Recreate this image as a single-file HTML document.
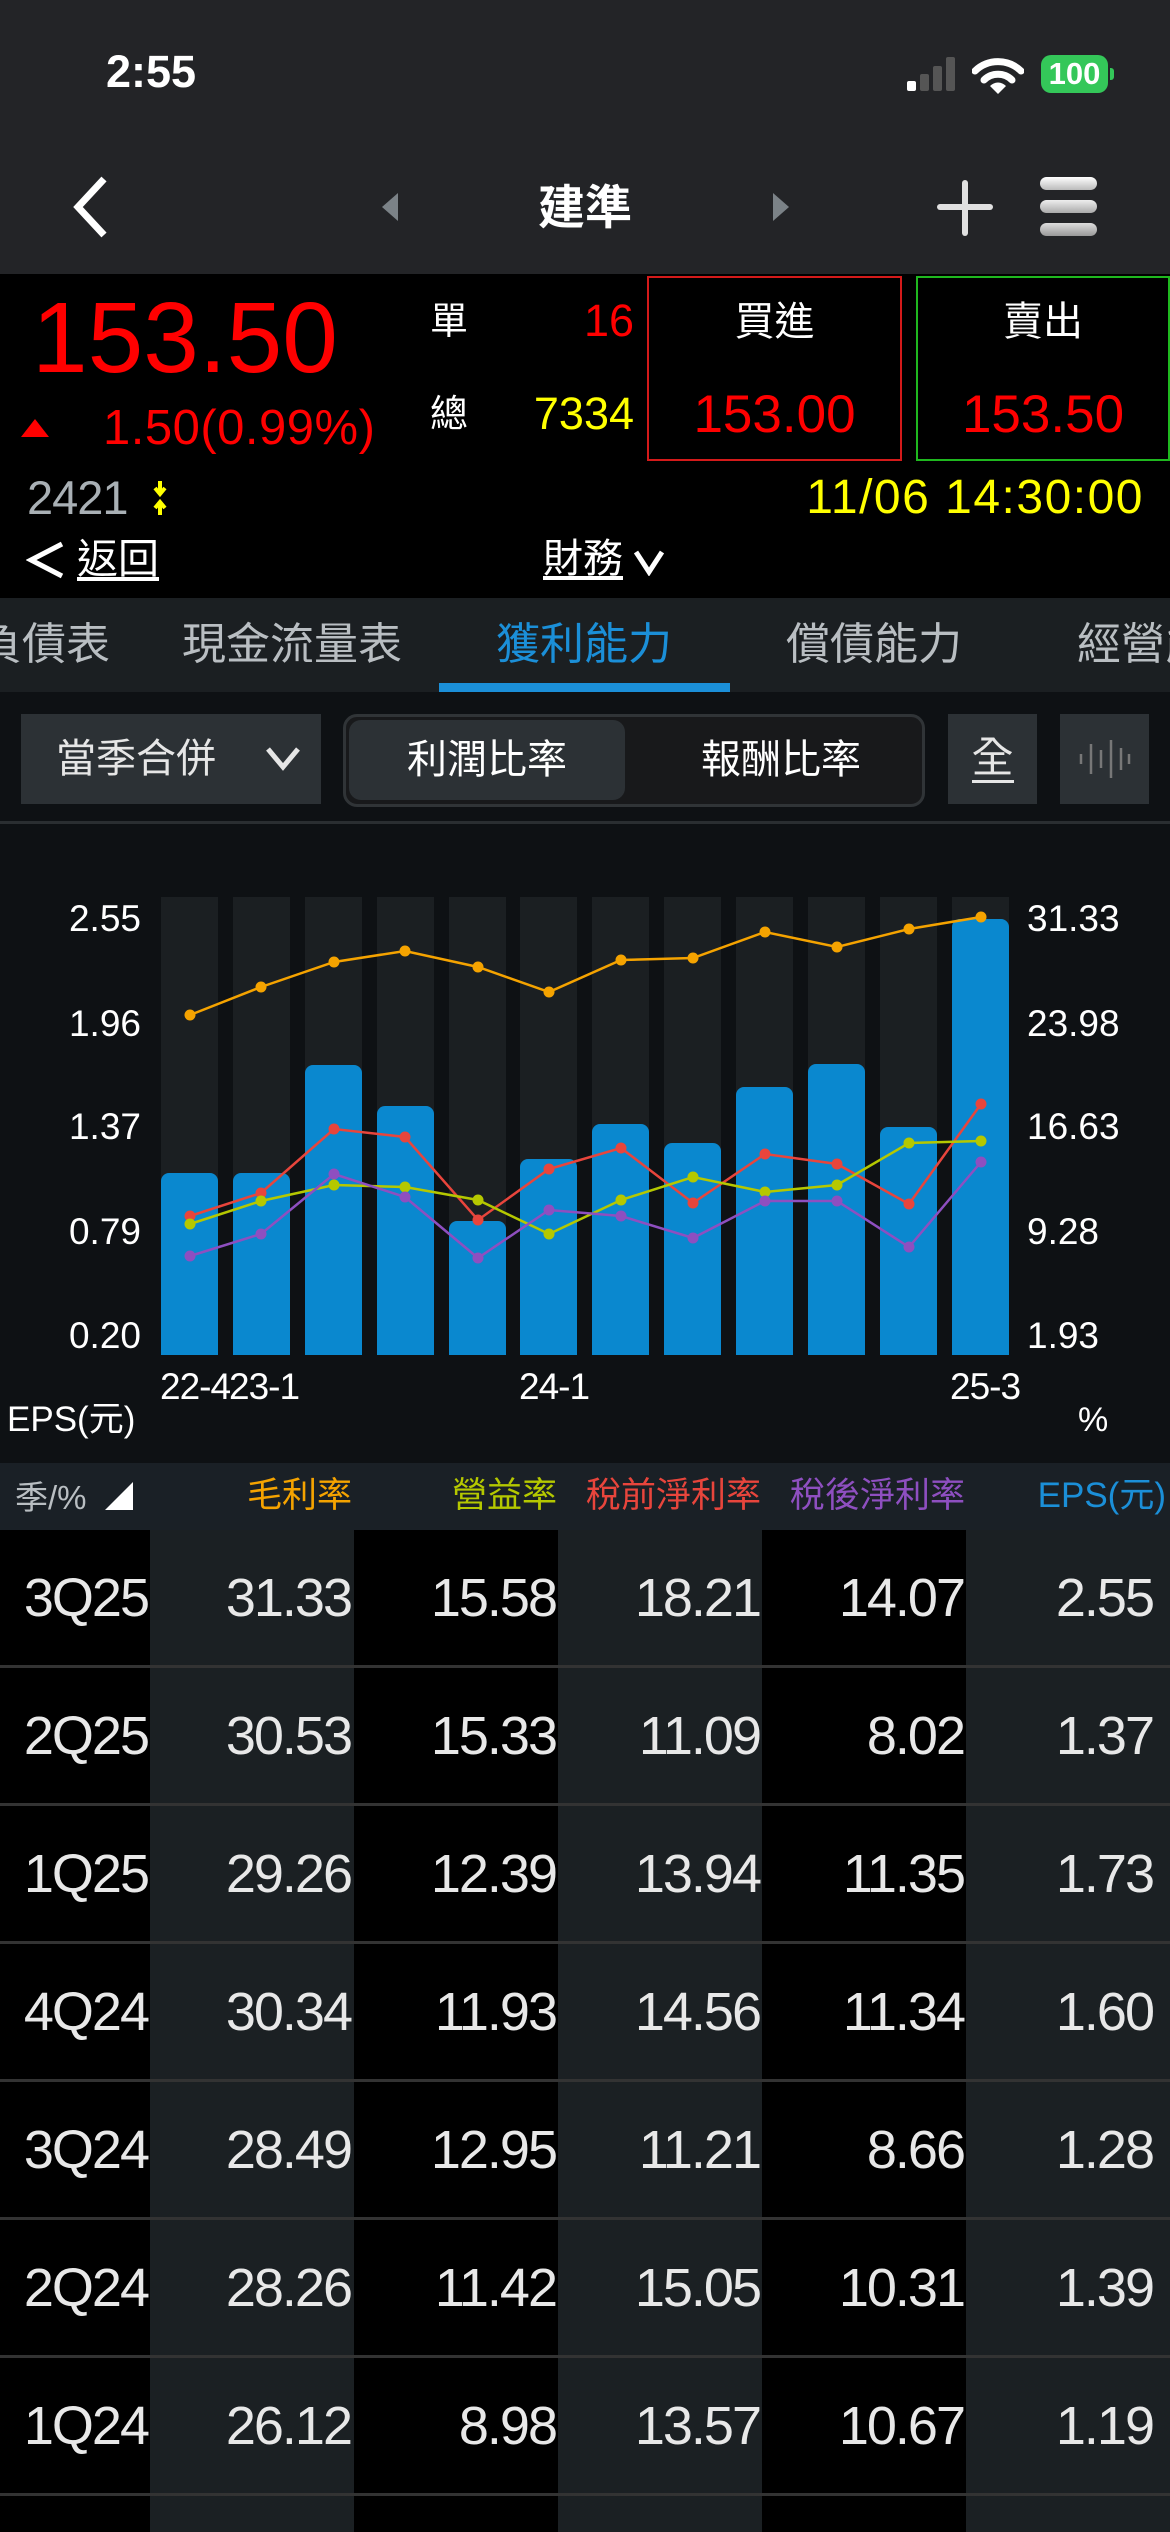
<!DOCTYPE html>
<html><head><meta charset="utf-8"><style>
*{margin:0;padding:0;box-sizing:border-box}
body{width:1170px;height:2532px;background:#000;position:relative;overflow:hidden;font-family:"Liberation Sans","Noto Sans CJK TC",sans-serif;color:#fff}
.a{position:absolute;white-space:nowrap}
.r{text-align:right}
.c{text-align:center}
.t{position:absolute;font-size:54px;line-height:60px;color:#e8e8e8;text-align:right;letter-spacing:-2px}
</style></head><body>
<!-- status + nav -->
<div class="a" style="left:0;top:0;width:1170px;height:274px;background:#232427"></div>
<div class="a" style="left:106px;top:44px;font-size:45px;font-weight:bold;line-height:56px">2:55</div>
<div class="a" style="left:907px;top:81px;width:9px;height:10px;background:#fff;border-radius:2px"></div>
<div class="a" style="left:920px;top:74px;width:9px;height:17px;background:#555;border-radius:2px"></div>
<div class="a" style="left:933px;top:66px;width:9px;height:25px;background:#555;border-radius:2px"></div>
<div class="a" style="left:946px;top:57px;width:9px;height:34px;background:#555;border-radius:2px"></div>
<svg class="a" style="left:972px;top:55px" width="52" height="40" viewBox="0 0 52 40"><path d="M3 16 A33 33 0 0 1 49 16" stroke="#fff" stroke-width="7" fill="none" stroke-linecap="round"/><path d="M12 25 A20 20 0 0 1 40 25" stroke="#fff" stroke-width="7" fill="none" stroke-linecap="round"/><path d="M18 31 L26 39 L34 31 A11 11 0 0 0 18 31Z" fill="#fff"/></svg>
<div class="a c" style="left:1041px;top:55px;width:67px;height:38px;background:#34c759;border-radius:10px;font-size:31px;font-weight:bold;line-height:38px">100</div>
<div class="a" style="left:1110px;top:68px;width:4px;height:12px;background:#34c759;border-radius:0 3px 3px 0"></div>
<svg class="a" style="left:66px;top:175px" width="48" height="64" viewBox="0 0 48 64"><path d="M38 4 L12 32 L38 60" stroke="#fff" stroke-width="7" fill="none"/></svg>
<svg class="a" style="left:380px;top:192px" width="20" height="30"><path d="M18 1 L2 15 L18 29Z" fill="#7b8287"/></svg>
<svg class="a" style="left:771px;top:192px" width="20" height="30"><path d="M2 1 L18 15 L2 29Z" fill="#7b8287"/></svg>
<div class="a c" style="left:485px;top:178px;width:200px;font-size:47px;font-weight:bold;line-height:60px">建準</div>
<div class="a" style="left:962px;top:180px;width:6px;height:56px;background:#e0e0e0;border-radius:3px"></div>
<div class="a" style="left:937px;top:204px;width:56px;height:6px;background:#e0e0e0;border-radius:3px"></div>
<div class="a" style="left:1040px;top:177px;width:57px;height:13px;background:linear-gradient(#fff,#bbb);border-radius:7px"></div>
<div class="a" style="left:1040px;top:200px;width:57px;height:13px;background:linear-gradient(#eee,#aaa);border-radius:7px"></div>
<div class="a" style="left:1040px;top:223px;width:57px;height:13px;background:linear-gradient(#ddd,#999);border-radius:7px"></div>
<!-- quote -->
<div class="a" style="left:32px;top:283px;font-size:100px;color:#ff0000;line-height:110px">153.50</div>
<svg class="a" style="left:20px;top:418px" width="30" height="20"><path d="M15 1 L29 19 L1 19Z" fill="#ff0000"/></svg>
<div class="a" style="left:103px;top:400px;font-size:49px;color:#ff0000;line-height:56px;letter-spacing:0.5px">1.50(0.99%)</div>
<div class="a" style="left:430px;top:299px;font-size:38px;line-height:46px">單</div>
<div class="a r" style="left:520px;top:296px;width:114px;font-size:45px;color:#ff0000;line-height:50px">16</div>
<div class="a" style="left:430px;top:392px;font-size:38px;line-height:46px">總</div>
<div class="a r" style="left:500px;top:389px;width:134px;font-size:45px;color:#ffff00;line-height:50px">7334</div>
<div class="a" style="left:647px;top:276px;width:255px;height:185px;border:2px solid #d41a1a"></div>
<div class="a c" style="left:647px;top:297px;width:255px;font-size:40px;line-height:50px">買進</div>
<div class="a c" style="left:647px;top:385px;width:255px;font-size:53px;color:#ff0000;line-height:60px">153.00</div>
<div class="a" style="left:916px;top:276px;width:254px;height:185px;border:2px solid #1fb81f"></div>
<div class="a c" style="left:916px;top:297px;width:254px;font-size:40px;line-height:50px">賣出</div>
<div class="a c" style="left:916px;top:385px;width:254px;font-size:53px;color:#ff0000;line-height:60px">153.50</div>
<div class="a" style="left:27px;top:470px;font-size:47px;color:#a9b0b5;line-height:56px;letter-spacing:-1px">2421</div>
<svg class="a" style="left:151px;top:480px" width="18" height="36"><path d="M9 1 V13 M4 8 L9 14 L14 8 M9 35 V23 M4 28 L9 22 L14 28" stroke="#ffff00" stroke-width="4" fill="none"/></svg>
<div class="a r" style="left:700px;top:470px;width:444px;font-size:48px;color:#ffff00;line-height:56px;letter-spacing:1.5px">11/06 14:30:00</div>
<svg class="a" style="left:26px;top:540px" width="40" height="40"><path d="M36 4 L5 20 L36 36" stroke="#fff" stroke-width="5" fill="none"/></svg>
<div class="a" style="left:77px;top:535px;font-size:41px;line-height:48px;text-decoration:underline;text-underline-offset:4px">返回</div>
<div class="a" style="left:543px;top:535px;font-size:40px;line-height:48px;text-decoration:underline;text-underline-offset:4px">財務</div>
<svg class="a" style="left:633px;top:548px" width="32" height="28"><path d="M3 4 L16 24 L29 4" stroke="#fff" stroke-width="5" fill="none"/></svg>
<!-- tabs -->
<div class="a" style="left:0;top:598px;width:1170px;height:94px;background:#1b1f22;overflow:hidden">
<div class="a" style="left:-22px;top:20px;font-size:44px;color:#b9bec2;line-height:54px">負債表</div>
<div class="a" style="left:182px;top:20px;font-size:44px;color:#b9bec2;line-height:54px">現金流量表</div>
<div class="a" style="left:496px;top:20px;font-size:44px;color:#1b8fd8;line-height:54px">獲利能力</div>
<div class="a" style="left:786px;top:20px;font-size:44px;color:#b9bec2;line-height:54px">償債能力</div>
<div class="a" style="left:1077px;top:20px;font-size:44px;color:#b9bec2;line-height:54px">經營能力</div>
<div class="a" style="left:439px;top:85px;width:291px;height:9px;background:#1b8fd8"></div>
</div>
<!-- controls -->
<div class="a" style="left:0;top:692px;width:1170px;height:771px;background:#0e1114"></div>
<div class="a" style="left:21px;top:714px;width:300px;height:90px;background:#2c3135"></div>
<div class="a" style="left:56px;top:734px;font-size:40px;color:#e6e6e6;line-height:50px">當季合併</div>
<svg class="a" style="left:265px;top:745px" width="36" height="28"><path d="M3 4 L18 22 L33 4" stroke="#e6e6e6" stroke-width="5" fill="none"/></svg>
<div class="a" style="left:343px;top:714px;width:582px;height:93px;background:#18191b;border:3px solid #303437;border-radius:14px"></div>
<div class="a" style="left:349px;top:720px;width:276px;height:80px;background:#2c3135;border-radius:12px"></div>
<div class="a c" style="left:349px;top:735px;width:276px;font-size:40px;line-height:50px">利潤比率</div>
<div class="a c" style="left:643px;top:735px;width:276px;font-size:40px;line-height:50px">報酬比率</div>
<div class="a" style="left:948px;top:714px;width:89px;height:90px;background:#2c3135"></div>
<div class="a c" style="left:948px;top:733px;width:89px;font-size:42px;line-height:50px;color:#e6e6e6">全</div>
<div class="a" style="left:972px;top:780px;width:42px;height:3px;background:#e6e6e6"></div>
<div class="a" style="left:1060px;top:714px;width:89px;height:90px;background:#2c3135"></div>
<svg class="a" style="left:1078px;top:738px" width="54" height="42"><path d="M3 16V26 M13 6V36 M23 12V30 M33 2V40 M43 10V32 M51 16V26" stroke="#777" stroke-width="2.5"/></svg>
<div class="a" style="left:0;top:821px;width:1170px;height:3px;background:#2a2e31"></div>
<!-- chart -->
<svg class="a" style="left:0;top:0" width="1170" height="1470" viewBox="0 0 1170 1470">
<g fill="#1b1f22">
<rect x="161" y="897" width="57" height="458"/><rect x="233" y="897" width="57" height="458"/><rect x="305" y="897" width="57" height="458"/><rect x="377" y="897" width="57" height="458"/><rect x="449" y="897" width="57" height="458"/><rect x="520" y="897" width="57" height="458"/><rect x="592" y="897" width="57" height="458"/><rect x="664" y="897" width="57" height="458"/><rect x="736" y="897" width="57" height="458"/><rect x="808" y="897" width="57" height="458"/><rect x="880" y="897" width="57" height="458"/><rect x="952" y="897" width="57" height="458"/>
</g>
<g fill="#0a88cf">
<path d="M161 1355V1181a8 8 0 0 1 8-8h41a8 8 0 0 1 8 8V1355Z"/>
<path d="M233 1355V1181a8 8 0 0 1 8-8h41a8 8 0 0 1 8 8V1355Z"/>
<path d="M305 1355V1073a8 8 0 0 1 8-8h41a8 8 0 0 1 8 8V1355Z"/>
<path d="M377 1355V1114a8 8 0 0 1 8-8h41a8 8 0 0 1 8 8V1355Z"/>
<path d="M449 1355V1229a8 8 0 0 1 8-8h41a8 8 0 0 1 8 8V1355Z"/>
<path d="M520 1355V1167a8 8 0 0 1 8-8h41a8 8 0 0 1 8 8V1355Z"/>
<path d="M592 1355V1132a8 8 0 0 1 8-8h41a8 8 0 0 1 8 8V1355Z"/>
<path d="M664 1355V1151a8 8 0 0 1 8-8h41a8 8 0 0 1 8 8V1355Z"/>
<path d="M736 1355V1095a8 8 0 0 1 8-8h41a8 8 0 0 1 8 8V1355Z"/>
<path d="M808 1355V1072a8 8 0 0 1 8-8h41a8 8 0 0 1 8 8V1355Z"/>
<path d="M880 1355V1135a8 8 0 0 1 8-8h41a8 8 0 0 1 8 8V1355Z"/>
<path d="M952 1355V927a8 8 0 0 1 8-8h41a8 8 0 0 1 8 8V1355Z"/>
</g>
<g fill="none" stroke-width="2.5">
<polyline stroke="#f5a300" points="190,1015 261,987 334,962 405,951 478,967 549,992 621,960 693,958 765,932 837,947 909,929 981,917"/>
<polyline stroke="#e8453c" points="190,1216 261,1193 334,1129 405,1137 478,1220 549,1169 621,1148 693,1203 765,1154 837,1164 909,1204 981,1104"/>
<polyline stroke="#b5c800" points="190,1224 261,1201 334,1185 405,1187 478,1200 549,1234 621,1200 693,1177 765,1192 837,1185 909,1143 981,1141"/>
<polyline stroke="#8e4fc0" points="190,1256 261,1234 334,1174 405,1197 478,1258 549,1210 621,1216 693,1238 765,1201 837,1201 909,1247 981,1162"/>
</g>
<g fill="#f5a300"><circle cx="190" cy="1015" r="5.5"/><circle cx="261" cy="987" r="5.5"/><circle cx="334" cy="962" r="5.5"/><circle cx="405" cy="951" r="5.5"/><circle cx="478" cy="967" r="5.5"/><circle cx="549" cy="992" r="5.5"/><circle cx="621" cy="960" r="5.5"/><circle cx="693" cy="958" r="5.5"/><circle cx="765" cy="932" r="5.5"/><circle cx="837" cy="947" r="5.5"/><circle cx="909" cy="929" r="5.5"/><circle cx="981" cy="917" r="5.5"/></g>
<g fill="#e8453c"><circle cx="190" cy="1216" r="5.5"/><circle cx="261" cy="1193" r="5.5"/><circle cx="334" cy="1129" r="5.5"/><circle cx="405" cy="1137" r="5.5"/><circle cx="478" cy="1220" r="5.5"/><circle cx="549" cy="1169" r="5.5"/><circle cx="621" cy="1148" r="5.5"/><circle cx="693" cy="1203" r="5.5"/><circle cx="765" cy="1154" r="5.5"/><circle cx="837" cy="1164" r="5.5"/><circle cx="909" cy="1204" r="5.5"/><circle cx="981" cy="1104" r="5.5"/></g>
<g fill="#b5c800"><circle cx="190" cy="1224" r="5.5"/><circle cx="261" cy="1201" r="5.5"/><circle cx="334" cy="1185" r="5.5"/><circle cx="405" cy="1187" r="5.5"/><circle cx="478" cy="1200" r="5.5"/><circle cx="549" cy="1234" r="5.5"/><circle cx="621" cy="1200" r="5.5"/><circle cx="693" cy="1177" r="5.5"/><circle cx="765" cy="1192" r="5.5"/><circle cx="837" cy="1185" r="5.5"/><circle cx="909" cy="1143" r="5.5"/><circle cx="981" cy="1141" r="5.5"/></g>
<g fill="#8e4fc0"><circle cx="190" cy="1256" r="5.5"/><circle cx="261" cy="1234" r="5.5"/><circle cx="334" cy="1174" r="5.5"/><circle cx="405" cy="1197" r="5.5"/><circle cx="478" cy="1258" r="5.5"/><circle cx="549" cy="1210" r="5.5"/><circle cx="621" cy="1216" r="5.5"/><circle cx="693" cy="1238" r="5.5"/><circle cx="765" cy="1201" r="5.5"/><circle cx="837" cy="1201" r="5.5"/><circle cx="909" cy="1247" r="5.5"/><circle cx="981" cy="1162" r="5.5"/></g>
<g fill="#fff" font-family="Liberation Sans" font-size="37" text-anchor="end">
<text x="141" y="931">2.55</text><text x="141" y="1036">1.96</text><text x="141" y="1139">1.37</text><text x="141" y="1244">0.79</text><text x="141" y="1348">0.20</text>
</g>
<g fill="#fff" font-family="Liberation Sans" font-size="37">
<text x="1027" y="931">31.33</text><text x="1027" y="1036">23.98</text><text x="1027" y="1139">16.63</text><text x="1027" y="1244">9.28</text><text x="1027" y="1348">1.93</text>
<text x="160" y="1399" letter-spacing="-1">22-4</text><text x="229" y="1399" letter-spacing="-1">23-1</text>
<text x="519" y="1399" letter-spacing="-1">24-1</text><text x="950" y="1399" letter-spacing="-1">25-3</text>
<text x="1078" y="1431" font-size="34">%</text>
<text x="7" y="1431" font-size="35" font-family="Liberation Sans, Noto Sans CJK TC">EPS(元)</text>
</g>
</svg>
<!-- table header -->
<div class="a" style="left:0;top:1463px;width:1170px;height:67px;background:#1a2026"></div>
<div class="a" style="left:15px;top:1475px;font-size:33px;color:#b9bec2;line-height:46px">季/%</div>
<svg class="a" style="left:104px;top:1481px" width="30" height="30"><path d="M29 1 V29 H1Z" fill="#fff"/></svg>
<div class="a r" style="left:150px;top:1473px;width:202px;font-size:35px;color:#f5a300;line-height:46px">毛利率</div>
<div class="a r" style="left:354px;top:1473px;width:203px;font-size:35px;color:#b5c800;line-height:46px">營益率</div>
<div class="a r" style="left:558px;top:1473px;width:203px;font-size:35px;color:#e8453c;line-height:46px">稅前淨利率</div>
<div class="a r" style="left:762px;top:1473px;width:203px;font-size:35px;color:#8e4fc0;line-height:46px">稅後淨利率</div>
<div class="a r" style="left:966px;top:1473px;width:200px;font-size:35px;color:#1b8fd8;line-height:46px">EPS(元)</div>
<!-- table columns bg -->
<div class="a" style="left:150px;top:1530px;width:204px;height:1002px;background:#1b2023"></div>
<div class="a" style="left:558px;top:1530px;width:204px;height:1002px;background:#1b2023"></div>
<div class="a" style="left:966px;top:1530px;width:204px;height:1002px;background:#1b2023"></div>
<div class="a" style="left:0;top:1665px;width:1170px;height:3px;background:#333"></div>
<div class="a" style="left:0;top:1803px;width:1170px;height:3px;background:#333"></div>
<div class="a" style="left:0;top:1941px;width:1170px;height:3px;background:#333"></div>
<div class="a" style="left:0;top:2079px;width:1170px;height:3px;background:#333"></div>
<div class="a" style="left:0;top:2217px;width:1170px;height:3px;background:#333"></div>
<div class="a" style="left:0;top:2355px;width:1170px;height:3px;background:#333"></div>
<div class="a" style="left:0;top:2493px;width:1170px;height:3px;background:#333"></div>
<div class="t" style="left:0;top:1568px;width:148px">3Q25</div><div class="t" style="left:150px;top:1568px;width:201px">31.33</div><div class="t" style="left:354px;top:1568px;width:202px">15.58</div><div class="t" style="left:558px;top:1568px;width:202px">18.21</div><div class="t" style="left:762px;top:1568px;width:202px">14.07</div><div class="t" style="left:966px;top:1568px;width:187px">2.55</div>
<div class="t" style="left:0;top:1706px;width:148px">2Q25</div><div class="t" style="left:150px;top:1706px;width:201px">30.53</div><div class="t" style="left:354px;top:1706px;width:202px">15.33</div><div class="t" style="left:558px;top:1706px;width:202px">11.09</div><div class="t" style="left:762px;top:1706px;width:202px">8.02</div><div class="t" style="left:966px;top:1706px;width:187px">1.37</div>
<div class="t" style="left:0;top:1844px;width:148px">1Q25</div><div class="t" style="left:150px;top:1844px;width:201px">29.26</div><div class="t" style="left:354px;top:1844px;width:202px">12.39</div><div class="t" style="left:558px;top:1844px;width:202px">13.94</div><div class="t" style="left:762px;top:1844px;width:202px">11.35</div><div class="t" style="left:966px;top:1844px;width:187px">1.73</div>
<div class="t" style="left:0;top:1982px;width:148px">4Q24</div><div class="t" style="left:150px;top:1982px;width:201px">30.34</div><div class="t" style="left:354px;top:1982px;width:202px">11.93</div><div class="t" style="left:558px;top:1982px;width:202px">14.56</div><div class="t" style="left:762px;top:1982px;width:202px">11.34</div><div class="t" style="left:966px;top:1982px;width:187px">1.60</div>
<div class="t" style="left:0;top:2120px;width:148px">3Q24</div><div class="t" style="left:150px;top:2120px;width:201px">28.49</div><div class="t" style="left:354px;top:2120px;width:202px">12.95</div><div class="t" style="left:558px;top:2120px;width:202px">11.21</div><div class="t" style="left:762px;top:2120px;width:202px">8.66</div><div class="t" style="left:966px;top:2120px;width:187px">1.28</div>
<div class="t" style="left:0;top:2258px;width:148px">2Q24</div><div class="t" style="left:150px;top:2258px;width:201px">28.26</div><div class="t" style="left:354px;top:2258px;width:202px">11.42</div><div class="t" style="left:558px;top:2258px;width:202px">15.05</div><div class="t" style="left:762px;top:2258px;width:202px">10.31</div><div class="t" style="left:966px;top:2258px;width:187px">1.39</div>
<div class="t" style="left:0;top:2396px;width:148px">1Q24</div><div class="t" style="left:150px;top:2396px;width:201px">26.12</div><div class="t" style="left:354px;top:2396px;width:202px">8.98</div><div class="t" style="left:558px;top:2396px;width:202px">13.57</div><div class="t" style="left:762px;top:2396px;width:202px">10.67</div><div class="t" style="left:966px;top:2396px;width:187px">1.19</div>
</body></html>
